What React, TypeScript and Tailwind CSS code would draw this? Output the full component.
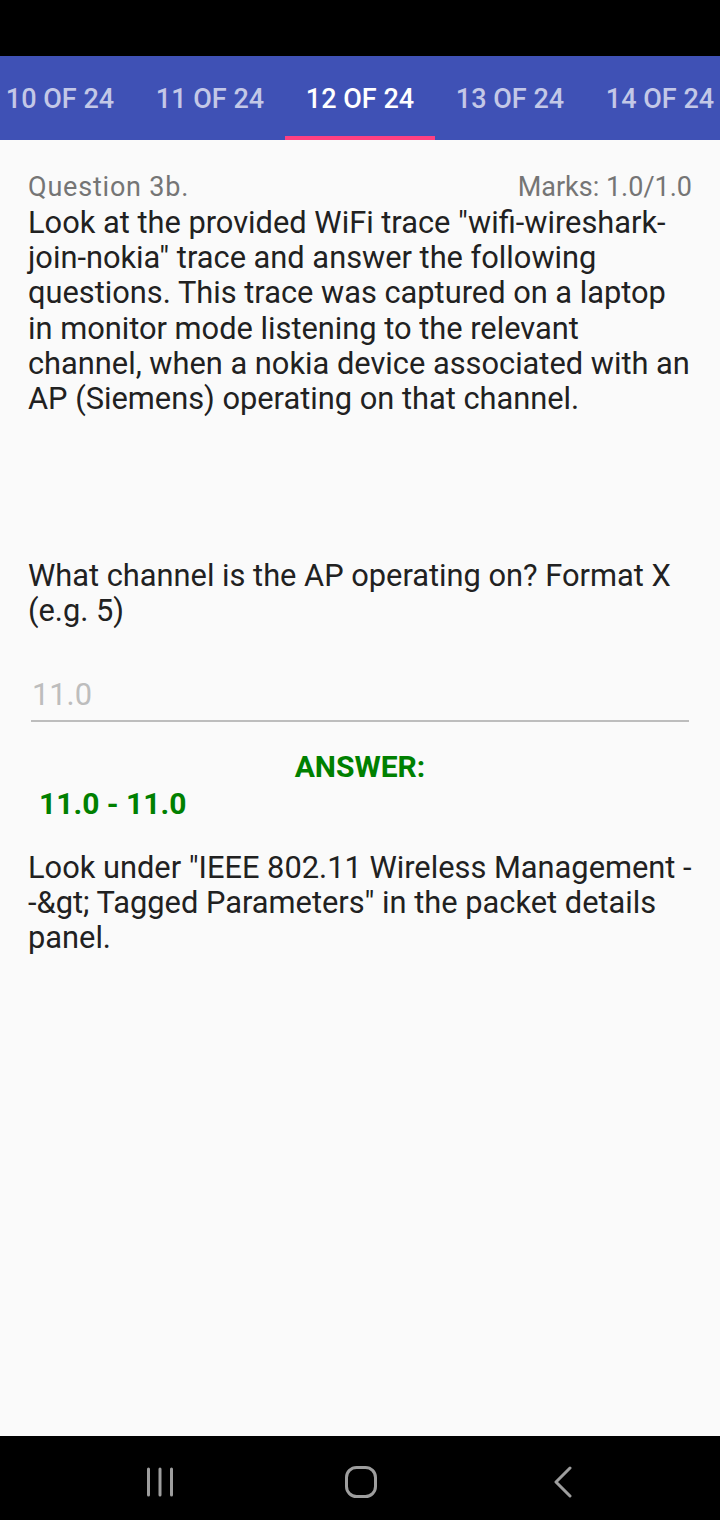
const tabs = ['10 OF 24', '11 OF 24', '12 OF 24', '13 OF 24', '14 OF 24'];

function NavBar() {
  return (
    <div className="relative h-[84px] bg-black">
      <svg className="absolute left-[145px] top-[31px]" width="30" height="30" viewBox="0 0 30 30">
        <g stroke="#9e9e9e" strokeWidth="3" strokeLinecap="round">
          <line x1="3.5" y1="2" x2="3.5" y2="28" />
          <line x1="15" y1="2" x2="15" y2="28" />
          <line x1="26.5" y1="2" x2="26.5" y2="28" />
        </g>
      </svg>
      <svg className="absolute left-[344px] top-[29px]" width="34" height="34" viewBox="0 0 34 34">
        <rect x="2.5" y="2.5" width="29" height="29" rx="10" fill="none" stroke="#9e9e9e" strokeWidth="3" />
      </svg>
      <svg className="absolute left-[551px] top-[30px]" width="24" height="32" viewBox="0 0 24 32">
        <polyline points="19,2 5,16 19,30" fill="none" stroke="#9e9e9e" strokeWidth="3" strokeLinecap="round" strokeLinejoin="round" />
      </svg>
    </div>
  );
}

export default function App() {
  return (
    <div className="flex h-[1520px] w-[720px] flex-col overflow-hidden bg-[#fafafa] font-['Roboto',sans-serif]">
      <div className="h-[56px] bg-black" />
      <div className="flex h-[84px] overflow-hidden bg-[#3f51b5]">
        <div className="-ml-[15px] flex">
          {tabs.map((t, i) => (
            <div
              key={t}
              className={`flex h-[84px] w-[150px] shrink-0 items-center justify-center border-b-4 pt-[6px] text-[27px] font-medium ${
                i === 2 ? 'border-[#ff4081] text-white' : 'border-transparent text-white/70'
              }`}
            >
              {t}
            </div>
          ))}
        </div>
      </div>

      <div className="flex-1 px-[28px] pt-[31px]">
        <div className="flex items-center justify-between text-[27px] leading-[32px] text-[#757575]">
          <span className="tracking-[0.8px]">Question 3b.</span>
          <span>Marks: 1.0/1.0</span>
        </div>
        <p className="mt-[2px] text-[30.8px] leading-[35.2px] text-[#212121]">
          Look at the provided WiFi trace "wifi-wireshark-join-nokia" trace and answer the following
          questions. This trace was captured on a laptop in monitor mode listening to the relevant
          channel, when a nokia device associated with an AP (Siemens) operating on that channel.
        </p>

        <p className="mt-[142px] text-[30.8px] leading-[35px] text-[#212121]">
          What channel is the AP operating on? Format X (e.g. 5)
        </p>

        <div className="mx-[3px] mt-[49px] border-b-2 border-[#bdbdbd] pb-[7px] pl-[1px] text-[30.8px] leading-[36px] text-[#bdbdbd]">
          11.0
        </div>

        <div className="mt-[27px] text-center text-[30px] font-bold leading-[36px] text-[#008000]">
          ANSWER:
        </div>
        <div className="pl-[11px] text-[30px] font-bold leading-[38px] text-[#008000]">11.0 - 11.0</div>

        <p className="mt-[27px] text-[30.8px] leading-[35px] text-[#212121]">
          Look under "IEEE 802.11 Wireless Management -<wbr />-&amp;gt; Tagged Parameters" in the packet
          details panel.
        </p>
      </div>

      <NavBar />
    </div>
  );
}
